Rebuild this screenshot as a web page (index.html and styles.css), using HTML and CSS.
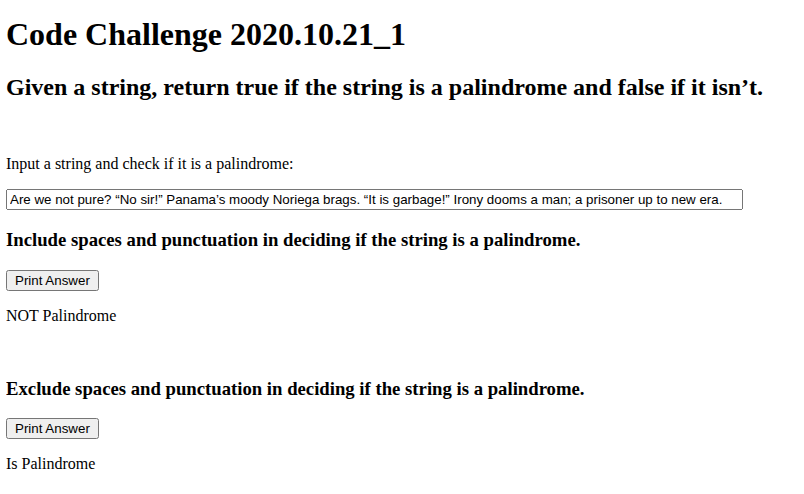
FILE: index.html
```html
<!DOCTYPE html>
<html>
<head>
<meta charset="utf-8">
<link rel="stylesheet" href="styles.css">
</head>
<body>
<h1 class="title">Code Challenge 2020.10.21_1</h1>
<h2>Given a string, return true if the string is a palindrome and false if it isn’t.</h2>
<br>
<p>Input a string and check if it is a palindrome:</p>
<input class="str" type="text" value="Are we not pure? “No sir!” Panama’s moody Noriega brags. “It is garbage!” Irony dooms a man; a prisoner up to new era.">
<h3>Include spaces and punctuation in deciding if the string is a palindrome.</h3>
<button class="btn">Print Answer</button>
<p>NOT Palindrome</p>
<br>
<h3>Exclude spaces and punctuation in deciding if the string is a palindrome.</h3>
<button class="btn">Print Answer</button>
<p>Is Palindrome</p>
</body>
</html>
```
FILE: styles.css
```css
body {
  font-family: "Liberation Serif", "Times New Roman", serif;
  margin: 6px;
  color: #000;
  background: #fff;
}
.title {
  margin-top: 10px;
}
.str {
  width: 729px;
  font-family: "Liberation Sans", Arial, sans-serif;
  font-size: 13.33px;
}
.btn {
  font-family: "Liberation Sans", Arial, sans-serif;
  font-size: 13.33px;
  padding: 1px 7px;
}
```
